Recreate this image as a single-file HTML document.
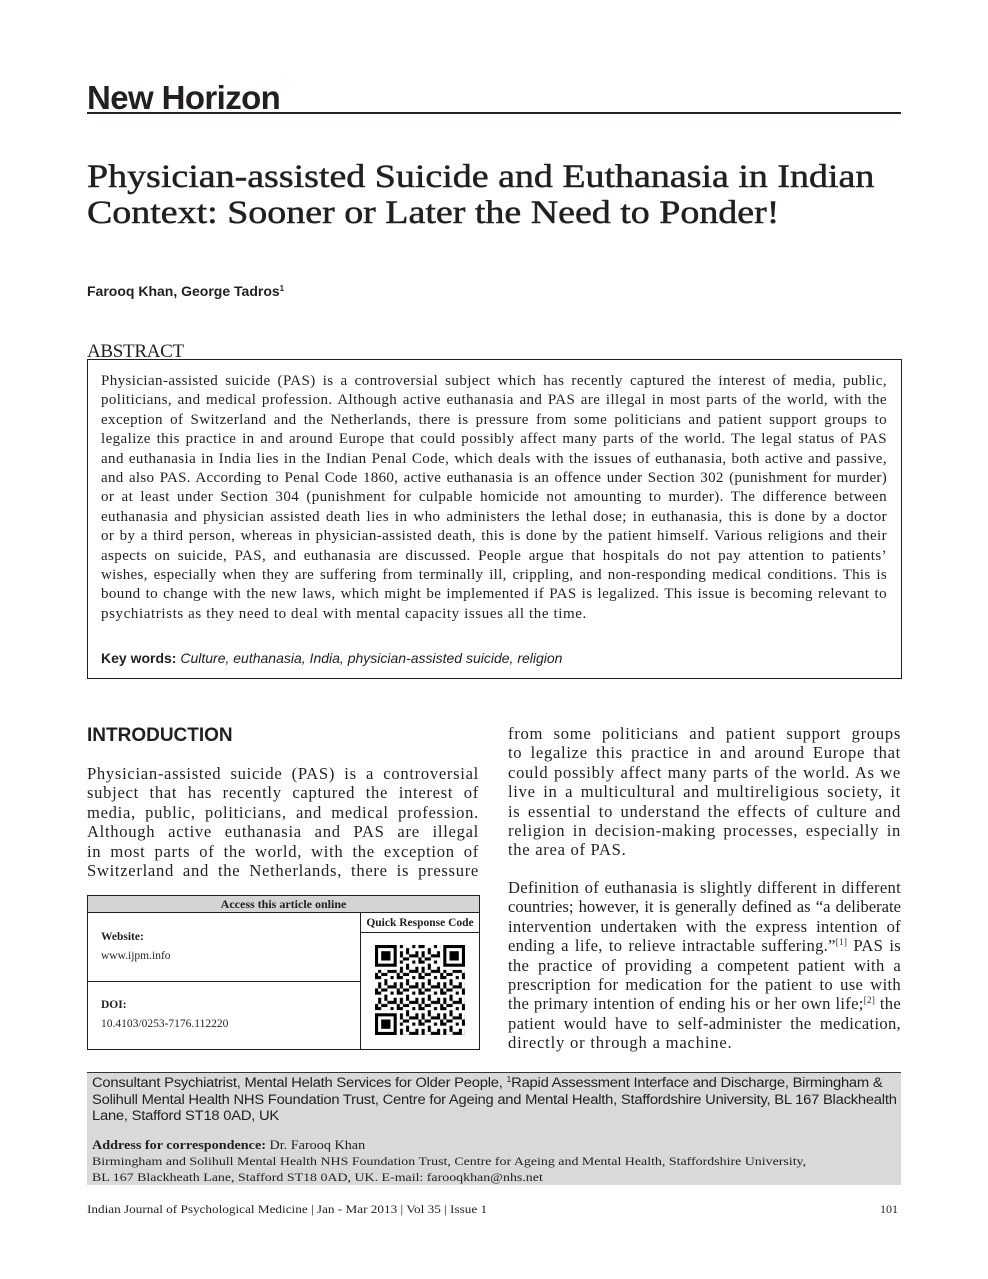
<!DOCTYPE html>
<html><head><meta charset="utf-8"><style>
*{margin:0;padding:0;box-sizing:border-box}
body{width:988px;height:1279px;background:#fff;position:relative;overflow:hidden;color:#231f20;font-family:"Liberation Serif",serif}
.a{position:absolute}
.j div{text-align:justify;text-align-last:justify;white-space:nowrap;overflow:visible}
.j div.l{text-align-last:left}
.sans{font-family:"Liberation Sans",sans-serif}
sup{font-size:9px;line-height:0;vertical-align:0;position:relative;top:-6px}
</style></head><body>
<div class="a sans" style="left:87px;top:79px;font-size:33px;font-weight:bold;letter-spacing:-0.6px">New Horizon</div>
<div class="a" style="left:87px;top:112px;width:814px;height:2px;background:#231f20"></div>

<div class="a" style="left:87px;top:159px;font-size:33px;line-height:36px;white-space:nowrap;transform:scaleX(1.15);transform-origin:left;-webkit-text-stroke:0.5px #231f20">Physician-assisted Suicide and Euthanasia in Indian<br>Context: Sooner or Later the Need to Ponder!</div>

<div class="a sans" style="left:87px;top:283px;font-size:14px;font-weight:bold">Farooq Khan, George Tadros<sup style="font-size:8px;top:-5px">1</sup></div>

<div class="a" style="left:87px;top:341px;font-size:19px;letter-spacing:-0.3px">ABSTRACT</div>
<div class="a" style="left:87px;top:359px;width:815px;height:320px;border:1px solid #231f20"></div>
<div class="a j" style="left:101px;top:372px;width:786px;font-size:15px;letter-spacing:0.4px;line-height:19.4px">
<div>Physician-assisted suicide (PAS) is a controversial subject which has recently captured the interest of media, public,</div>
<div>politicians, and medical profession. Although active euthanasia and PAS are illegal in most parts of the world, with the</div>
<div>exception of Switzerland and the Netherlands, there is pressure from some politicians and patient support groups to</div>
<div>legalize this practice in and around Europe that could possibly affect many parts of the world. The legal status of PAS</div>
<div>and euthanasia in India lies in the Indian Penal Code, which deals with the issues of euthanasia, both active and passive,</div>
<div style="letter-spacing:0.3px">and also PAS. According to Penal Code 1860, active euthanasia is an offence under Section 302 (punishment for murder)</div>
<div>or at least under Section 304 (punishment for culpable homicide not amounting to murder). The difference between</div>
<div>euthanasia and physician assisted death lies in who administers the lethal dose; in euthanasia, this is done by a doctor</div>
<div>or by a third person, whereas in physician-assisted death, this is done by the patient himself. Various religions and their</div>
<div>aspects on suicide, PAS, and euthanasia are discussed. People argue that hospitals do not pay attention to patients’</div>
<div style="letter-spacing:0.3px">wishes, especially when they are suffering from terminally ill, crippling, and non-responding medical conditions. This is</div>
<div>bound to change with the new laws, which might be implemented if PAS is legalized. This issue is becoming relevant to</div>
<div class="l" style="letter-spacing:0.6px">psychiatrists as they need to deal with mental capacity issues all the time.</div>
</div>
<div class="a sans" style="left:101px;top:650px;font-size:14px"><b>Key words:</b> <i>Culture, euthanasia, India, physician-assisted suicide, religion</i></div>

<div class="a sans" style="left:87px;top:725px;font-size:19px;font-weight:bold">INTRODUCTION</div>
<div class="a j" style="left:87px;top:764px;width:392px;font-size:16.6px;letter-spacing:0.7px;line-height:19.4px">
<div>Physician-assisted suicide (PAS) is a controversial</div>
<div>subject that has recently captured the interest of</div>
<div>media, public, politicians, and medical profession.</div>
<div>Although active euthanasia and PAS are illegal</div>
<div>in most parts of the world, with the exception of</div>
<div>Switzerland and the Netherlands, there is pressure</div>
</div>

<div class="a j" style="left:508px;top:724px;width:393px;font-size:16.6px;letter-spacing:0.7px;line-height:19.4px">
<div>from some politicians and patient support groups</div>
<div>to legalize this practice in and around Europe that</div>
<div>could possibly affect many parts of the world. As we</div>
<div>live in a multicultural and multireligious society, it</div>
<div>is essential to understand the effects of culture and</div>
<div>religion in decision-making processes, especially in</div>
<div class="l">the area of PAS.</div>
</div>
<div class="a j" style="left:508px;top:878px;width:393px;font-size:16.6px;letter-spacing:0.3px;line-height:19.4px">
<div>Definition of euthanasia is slightly different in different</div>
<div style="letter-spacing:0px">countries; however, it is generally defined as “a deliberate</div>
<div>intervention undertaken with the express intention of</div>
<div>ending a life, to relieve intractable suffering.”<sup>[1]</sup> PAS is</div>
<div>the practice of providing a competent patient with a</div>
<div>prescription for medication for the patient to use with</div>
<div>the primary intention of ending his or her own life;<sup>[2]</sup> the</div>
<div>patient would have to self-administer the medication,</div>
<div class="l" style="letter-spacing:0.8px">directly or through a machine.</div>
</div>

<div class="a" style="left:87px;top:895px;width:393px;height:155px;border:1px solid #231f20"></div>
<div class="a" style="left:88px;top:896px;width:391px;height:17px;background:#d4d4d4;border-bottom:1px solid #231f20;font-size:12px;font-weight:bold;text-align:center;line-height:16px">Access this article online</div>
<div class="a" style="left:360px;top:913px;width:1px;height:137px;background:#231f20"></div>
<div class="a" style="left:361px;top:932px;width:118px;height:1px;background:#231f20"></div>
<div class="a" style="left:361px;top:914px;width:118px;font-size:11.5px;font-weight:bold;text-align:center;line-height:18px">Quick Response Code</div>
<div class="a" style="left:88px;top:981px;width:272px;height:1px;background:#231f20"></div>
<div class="a" style="left:101px;top:931px;font-size:11.5px;font-weight:bold">Website:</div>
<div class="a" style="left:101px;top:950px;font-size:11.5px">www.ijpm.info</div>
<div class="a" style="left:101px;top:999px;font-size:11.5px;font-weight:bold">DOI:</div>
<div class="a" style="left:101px;top:1018px;font-size:11.5px">10.4103/0253-7176.112220</div>
<svg class="a" style="left:375px;top:945px" width="90" height="90" viewBox="0 0 29 29">
<defs><pattern id="p" width="7" height="5" patternUnits="userSpaceOnUse">
<rect x="0" y="0" width="2" height="1" fill="#000"/><rect x="3" y="1" width="1" height="2" fill="#000"/><rect x="5" y="0" width="1" height="1" fill="#000"/><rect x="1" y="2" width="1" height="2" fill="#000"/><rect x="4" y="3" width="3" height="1" fill="#000"/><rect x="0" y="4" width="1" height="1" fill="#000"/><rect x="6" y="2" width="1" height="1" fill="#000"/><rect x="2" y="4" width="2" height="1" fill="#000"/></pattern></defs>
<rect width="29" height="29" fill="url(#p)"/>
<g fill="#fff"><rect x="0" y="0" width="8" height="8"/><rect x="21" y="0" width="8" height="8"/><rect x="0" y="21" width="8" height="8"/></g>
<g fill="none" stroke="#000"><rect x="0.5" y="0.5" width="6" height="6"/><rect x="22.5" y="0.5" width="6" height="6"/><rect x="0.5" y="22.5" width="6" height="6"/></g>
<g fill="#000"><rect x="2" y="2" width="3" height="3"/><rect x="24" y="2" width="3" height="3"/><rect x="2" y="24" width="3" height="3"/></g>
</svg>

<div class="a" style="left:87px;top:1072px;width:814px;height:113px;background:#d9d9d9;border-top:1.5px solid #333"></div>
<div class="a sans" style="left:92px;top:1075px;font-size:13.4px;line-height:16.5px;letter-spacing:-0.2px;white-space:nowrap;transform:scaleX(1.1);transform-origin:left">Consultant Psychiatrist, Mental Helath Services for Older People, <sup style="font-size:8px;top:-5px">1</sup>Rapid Assessment Interface and Discharge, Birmingham &amp;<br>Solihull Mental Health NHS Foundation Trust, Centre for Ageing and Mental Health, Staffordshire University, BL 167 Blackhealth<br>Lane, Stafford ST18 0AD, UK</div>
<div class="a" style="left:92px;top:1137px;font-size:13px;white-space:nowrap;transform:scaleX(1.09);transform-origin:left"><b>Address for correspondence:</b> Dr. Farooq Khan</div>
<div class="a" style="left:92px;top:1154px;font-size:12px;line-height:15.5px;white-space:nowrap;transform:scaleX(1.16);transform-origin:left">Birmingham and Solihull Mental Health NHS Foundation Trust, Centre for Ageing and Mental Health, Staffordshire University,<br>BL 167 Blackheath Lane, Stafford ST18 0AD, UK. E-mail: farooqkhan@nhs.net</div>

<div class="a" style="left:87px;top:1202px;font-size:12px;white-space:nowrap;transform:scaleX(1.1);transform-origin:left">Indian Journal of Psychological Medicine | Jan - Mar 2013 | Vol 35 | Issue 1</div>
<div class="a" style="left:880px;top:1202px;font-size:12px">101</div>
</body></html>
